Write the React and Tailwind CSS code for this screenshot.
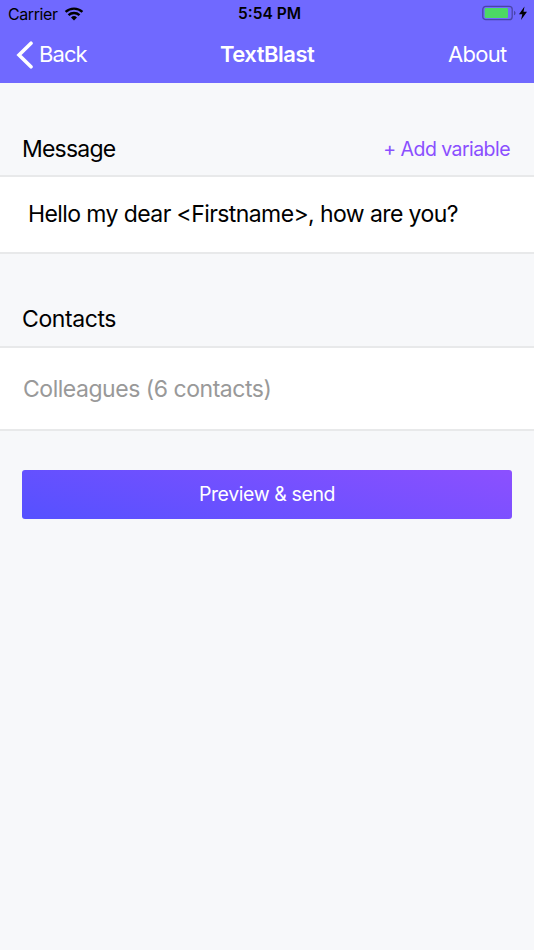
function StatusBar() {
  return (
    <div className="flex h-7 items-center text-black">
      <span className="ml-2 w-[50px] text-[16px] leading-7 tracking-[-0.4px] whitespace-nowrap">Carrier</span>
      <svg className="ml-[6px] h-[14px] w-5 -mt-px" viewBox="0 0 20 14" fill="none" stroke="#000" strokeWidth="2.4">
        <path d="M1.6 4.9a12.4 12.4 0 0 1 16.8 0" />
        <path d="M4.500 8.200a8.100 8.100 0 0 1 11 0" />
        <path d="M10 13.500L7 10.500a4.400 4.400 0 0 1 6 0z" fill="#000" stroke="none" />
      </svg>
      <span className="ml-[154px] w-[63px] text-[15.5px] font-semibold leading-7 whitespace-nowrap">5:54 PM</span>
      <svg className="-mt-[2px] ml-[181px] h-4 w-12" viewBox="0 0 48 16">
        <rect x="0.8" y="1.3" width="29.4" height="13.4" rx="3" fill="none" stroke="#4a45a8" strokeWidth="1.3" />
        <rect x="2.7" y="3" width="23.3" height="10" rx="1" fill="#4cd964" />
        <path d="M32 5.7c2 .8 2 3.8 0 4.6z" fill="#4a45a8" />
        <path d="M42.500 1.500L37 9.300h3.300L39 15l6-8.300h-3.500z" fill="#000" />
      </svg>
    </div>
  );
}

export default function App() {
  return (
    <div className="flex h-[950px] w-[534px] flex-col overflow-hidden bg-[#f7f8fa] font-[Inter,sans-serif] text-black">
      <header className="h-[83px] bg-[#7069ff]">
        <StatusBar />
        <div className="flex h-[53px] items-center text-[22px] text-white">
          <svg className="ml-4 h-7 w-[18px]" viewBox="0 0 18 28" fill="none" stroke="#fff" strokeWidth="3.6" strokeLinecap="round">
            <path d="M15 2.200L3 14l12 11.800" />
          </svg>
          <span className="ml-[5px] w-[181px] tracking-[-0.9px]">Back</span>
          <span className="w-[228px] font-semibold tracking-[-0.5px]">TextBlast</span>
          <span className="tracking-[-0.7px]">About</span>
        </div>
      </header>
      <div className="flex h-[92px] items-end justify-between pr-6 pb-[9px] pl-[22px]">
        <h2 className="text-[23px] tracking-[-0.8px]">Message</h2>
        <span className="pb-[2px] text-[19.5px] tracking-[-0.55px] text-[#8a4fff]">+ Add variable</span>
      </div>
      <div className="flex h-[79px] items-center border-y-2 border-[#e8e9ea] bg-white pl-7 text-[23px] tracking-[-0.59px]">Hello my dear &lt;Firstname&gt;, how are you?</div>
      <div className="flex h-[92px] items-end pb-[10px] pl-[22px]">
        <h2 className="text-[23px] tracking-[-0.4px]">Contacts</h2>
      </div>
      <div className="flex h-[85px] items-center border-y-2 border-[#e8e9ea] bg-white pt-px pl-[23px] text-[23px] tracking-[-0.47px] text-[#999]">Colleagues (6 contacts)</div>
      <button className="mx-[22px] mt-[39px] h-[49px] rounded-[3px] bg-[linear-gradient(15deg,#5551ff,#8c50ff)] pt-px text-[19.5px] tracking-[-0.4px] text-white">Preview &amp; send</button>
    </div>
  );
}
